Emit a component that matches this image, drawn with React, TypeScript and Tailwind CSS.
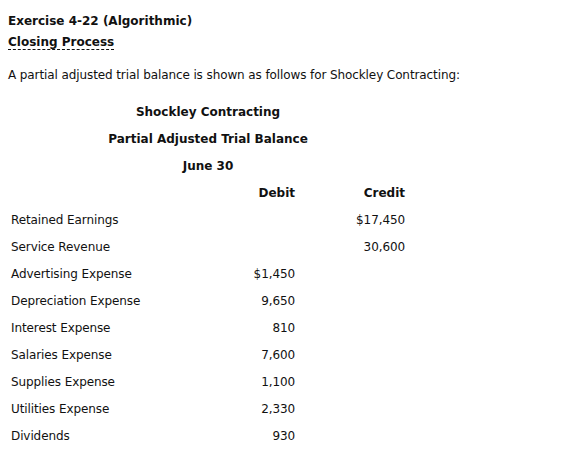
type Row = { label: string; debit?: string; credit?: string };

const rows: Row[] = [
  { label: "Retained Earnings", credit: "$17,450" },
  { label: "Service Revenue", credit: "30,600" },
  { label: "Advertising Expense", debit: "$1,450" },
  { label: "Depreciation Expense", debit: "9,650" },
  { label: "Interest Expense", debit: "810" },
  { label: "Salaries Expense", debit: "7,600" },
  { label: "Supplies Expense", debit: "1,100" },
  { label: "Utilities Expense", debit: "2,330" },
  { label: "Dividends", debit: "930" },
];

const App = () => {
  return (
    <div className="min-h-screen bg-white px-2 pt-[11px] text-[12px] text-[#111] font-['DejaVu_Sans',Verdana,sans-serif]">
      <div className="font-bold leading-[21px]">Exercise 4-22 (Algorithmic)</div>
      <div className="font-bold leading-[21px]">
        <span className="border-b border-dashed border-[#111]">Closing Process</span>
      </div>
      <p className="mt-3 leading-[21px] tracking-[-0.1px]">
        A partial adjusted trial balance is shown as follows for Shockley Contracting:
      </p>

      <div className="mt-[13px] grid w-[400px] grid-cols-[180px_110px_110px] leading-[27px]">
        <div className="col-span-3 text-center font-bold">Shockley Contracting</div>
        <div className="col-span-3 text-center font-bold">Partial Adjusted Trial Balance</div>
        <div className="col-span-3 text-center font-bold">June 30</div>

        <div />
        <div className="px-[3px] text-right font-bold">Debit</div>
        <div className="px-[3px] text-right font-bold">Credit</div>

        {rows.map((r) => (
          <div key={r.label} className="contents tracking-[-0.1px]">
            <div className="px-[3px]">{r.label}</div>
            <div className="px-[3px] text-right">{r.debit ?? ""}</div>
            <div className="px-[3px] text-right">{r.credit ?? ""}</div>
          </div>
        ))}
      </div>
    </div>
  );
};

export default App;
